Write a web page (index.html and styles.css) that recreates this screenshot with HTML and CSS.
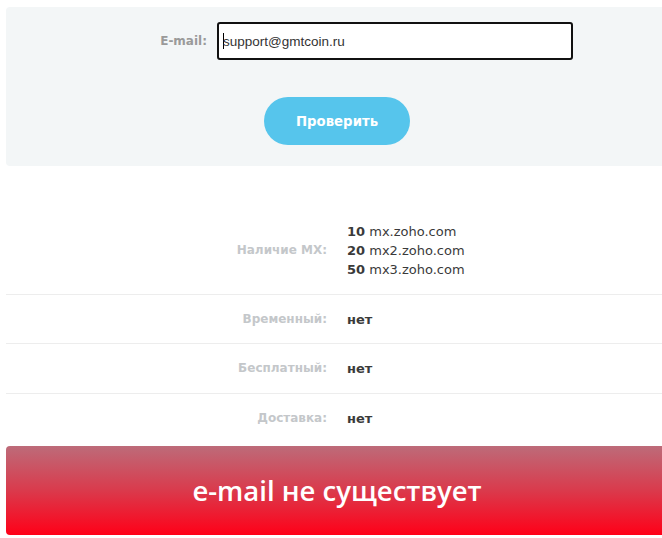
FILE: index.html
```html
<!DOCTYPE html>
<html lang="ru">
<head>
<meta charset="utf-8">
<title>Проверка e-mail</title>
<link rel="stylesheet" href="styles.css">
</head>
<body>
<div class="wrap">
  <form class="panel">
    <div class="field">
      <label class="field-label" for="email">E-mail:</label>
      <div class="input"><span class="caret"></span>support@gmtcoin.ru</div>
    </div>
    <div class="actions">
      <button type="button" class="btn">Проверить</button>
    </div>
  </form>

  <div class="results">
    <div class="row">
      <div class="key">Наличие MX:</div>
      <div class="val">
        <div><b>10</b> mx.zoho.com</div>
        <div><b>20</b> mx2.zoho.com</div>
        <div><b>50</b> mx3.zoho.com</div>
      </div>
    </div>
    <div class="row">
      <div class="key">Временный:</div>
      <div class="val"><b>нет</b></div>
    </div>
    <div class="row wide">
      <div class="key">Бесплатный:</div>
      <div class="val"><b>нет</b></div>
    </div>
    <div class="row last">
      <div class="key">Доставка:</div>
      <div class="val"><b>нет</b></div>
    </div>
  </div>

  <div class="banner">e-mail не существует</div>
</div>
</body>
</html>
```

FILE: styles.css
```css
html, body {
  margin: 0;
  padding: 0;
  background: #ffffff;
  overflow: hidden;
}
body {
  width: 662px;
  height: 538px;
}
.wrap {
  width: 662px;
  margin: 7px 0 0 6px;
  font-family: "DejaVu Sans", sans-serif;
}
.panel {
  background: #f3f6f7;
  border-radius: 4px;
  height: 159px;
  box-sizing: border-box;
  padding-top: 15px;
}
.field {
  display: flex;
  align-items: center;
}
.field-label {
  width: 211px;
  text-align: right;
  padding-right: 10px;
  box-sizing: border-box;
  font-size: 12px;
  font-weight: bold;
  color: #9a9a9a;
}
.input {
  width: 356px;
  height: 38px;
  box-sizing: border-box;
  border: 2px solid #111;
  border-radius: 3px;
  background: #fff;
  display: flex;
  align-items: center;
  padding-left: 4px;
  font-family: "Liberation Sans", Arial, sans-serif;
  font-size: 13.5px;
  color: #333;
}
.caret {
  display: inline-block;
  width: 1px;
  height: 16px;
  background: #000;
  margin-right: -1px;
}
.actions {
  display: flex;
  justify-content: center;
  margin-top: 37px;
}
.btn {
  width: 146px;
  height: 48px;
  border: none;
  border-radius: 24px;
  background: #56c5ec;
  color: #fff;
  font-family: "DejaVu Sans", sans-serif;
  font-weight: bold;
  font-size: 13.3px;
  padding: 0;
}
.results {
  margin-top: 41px;
}
.row {
  display: flex;
  align-items: center;
  padding: 15px 0;
  border-bottom: 1px solid #ededed;
  line-height: 19px;
}
.row + .row {
  padding: 15px 0 14px;
}
.row.wide {
  padding: 15px 0;
}
.row.last {
  border-bottom: none;
}
.key {
  width: 50%;
  box-sizing: border-box;
  padding-right: 10px;
  text-align: right;
  font-size: 12px;
  font-weight: bold;
  color: #c4c7ca;
}
.val {
  width: 50%;
  box-sizing: border-box;
  padding-left: 10px;
  font-size: 13px;
  color: #3a3a3a;
}
.val b {
  font-weight: bold;
}
.banner {
  margin-top: 4px;
  height: 89px;
  border-radius: 4px;
  background: linear-gradient(to bottom, #bd6b79 0%, #da3a4c 50%, #ff0018 100%);
  display: flex;
  align-items: center;
  justify-content: center;
  font-family: "Open Sans", sans-serif;
  font-size: 27.5px;
  font-weight: 600;
  color: #fff;
}
```
